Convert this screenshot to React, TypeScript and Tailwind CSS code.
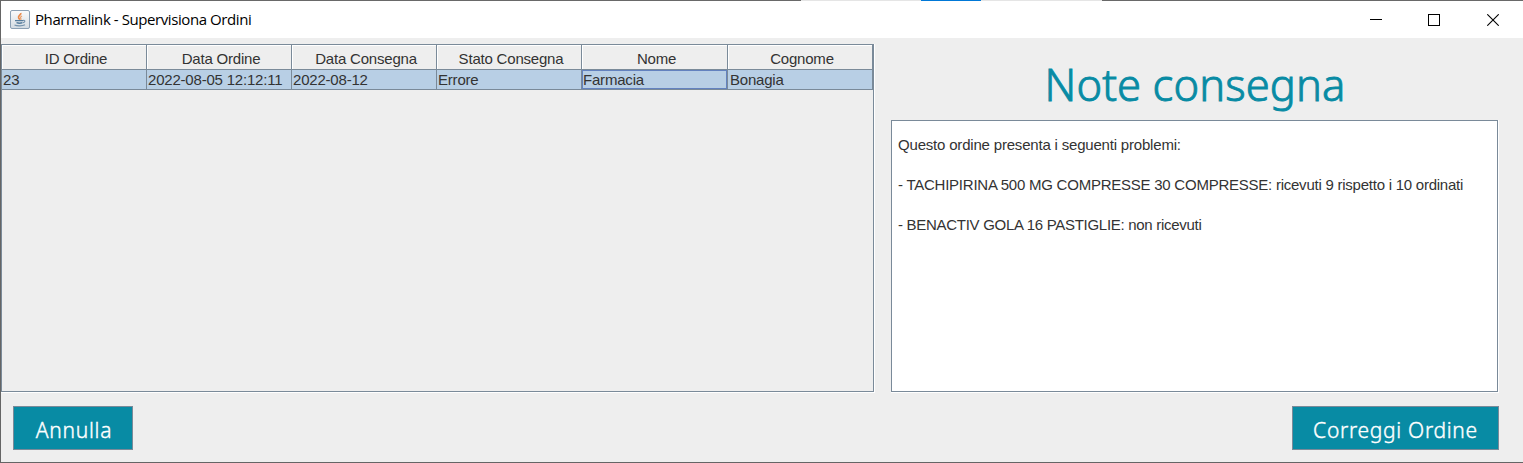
import type { ReactNode } from "react";

const columns = [
  { title: "ID Ordine", value: "23", width: "w-[145px]", inset: "pl-px" },
  { title: "Data Ordine", value: "2022-08-05 12:12:11", width: "w-[145px]", inset: "pl-px" },
  { title: "Data Consegna", value: "2022-08-12", width: "w-[145px]", inset: "pl-px" },
  { title: "Stato Consegna", value: "Errore", width: "w-[145px]", inset: "pl-px" },
  { title: "Nome", value: "Farmacia", width: "w-[146px]", inset: "pl-px", focused: true },
  { title: "Cognome", value: "Bonagia", width: "w-[145px]", inset: "pl-[2px]" },
];

function JavaIcon() {
  return (
    <svg className="h-5 w-5" viewBox="0 0 20 20" fill="none">
      <defs>
        <linearGradient id="tile" x1="0" y1="0" x2="0" y2="1">
          <stop offset="0" stopColor="#fafbfc" />
          <stop offset="1" stopColor="#d3dbe2" />
        </linearGradient>
      </defs>
      <rect x="0.5" y="0.5" width="19" height="18" rx="1.5" fill="url(#tile)" stroke="#8ba0b4" />
      <path d="M10.800 3c.6 1.800-3 2.700-2.200 4.700.3.800 1 1.300 1.400 2" stroke="#e98a4b" strokeWidth="1.700" />
      <path d="M12 6c-1.700.8-1.800 1.500-1.200 2.300.4.600.3 1-.2 1.600" stroke="#e9a06d" strokeWidth="1.200" />
      <path d="M5 10.700h8M6.500 12.700c2 .7 4 .7 6 0" stroke="#547b9b" strokeWidth="1.300" />
      <path d="M13 10.500c2.500-.6 2.300 1.600 0 2.300M4.500 15c2.500 1.200 8 1.200 10.500-.2" stroke="#7593ad" strokeWidth="1.200" />
    </svg>
  );
}

function ActionButton({ children, className }: { children: ReactNode; className: string }) {
  return (
    <button
      className={`flex h-11 items-center justify-center whitespace-nowrap border border-[#7a8a99] bg-[#088ba4] pt-[5px] font-['Noto_Sans','Open_Sans',sans-serif] text-[21px] font-light tracking-[0.700px] text-white [-webkit-text-stroke:0.400px_#ffffff] ${className}`}
    >
      {children}
    </button>
  );
}

export default function App() {
  return (
    <div className="flex h-[463px] w-[1523px] flex-col overflow-hidden border-b border-l border-[#656565] bg-[#eeeeee] font-['Liberation_Sans',Arial,sans-serif] text-[15px] tracking-[-0.200px] text-[#333333]">
      <div className="flex h-px shrink-0">
        <div className="w-[800px] bg-[#696969]" />
        <div className="w-[120px] bg-[#e5e5e5]" />
        <div className="w-[60px] bg-[#0078d7]" />
        <div className="w-[121px] bg-[#e5e5e5]" />
        <div className="grow bg-[#696969]" />
      </div>
      <header className="flex h-[37px] shrink-0 items-center bg-white pl-[9px] text-black">
        <JavaIcon />
        <span className="ml-[5px] whitespace-nowrap font-['Open_Sans','Noto_Sans',sans-serif] text-[15px] tracking-[-0.420px]">
          Pharmalink - Supervisiona Ordini
        </span>
        <div className="ml-auto flex items-center pr-[24px]">
          <svg className="mr-[46px] h-3 w-3" viewBox="0 0 12 12" shapeRendering="crispEdges">
            <path d="M0 5.500h12" stroke="#000" />
          </svg>
          <svg className="mr-[47px] h-3 w-3" viewBox="0 0 12 12" shapeRendering="crispEdges">
            <rect x="0.5" y="0.5" width="11" height="11" fill="none" stroke="#000" />
          </svg>
          <svg className="h-3 w-3" viewBox="0 0 12 12">
            <path d="M.3.3l11.400 11.400M11.700.3L.3 11.700" stroke="#000" strokeWidth="1.100" />
          </svg>
        </div>
      </header>
      <main className="flex h-[355px] shrink-0">
        <section className="mt-[6px] h-[349px] w-[874px] border-b border-r border-white">
          <div className="h-[348px] w-[873px] border border-[#7a8a99]">
            <div className="flex">
              {columns.map((c) => (
                <div
                  key={c.title}
                  className={`flex h-[25px] shrink-0 items-center justify-center border-b border-r border-[#7a8a99] pl-1 pt-[5px] shadow-[inset_1px_1px_0_#ffffff] ${c.width}`}
                >
                  {c.title}
                </div>
              ))}
            </div>
            <div className="flex">
              {columns.map((c) => (
                <div key={c.title} className={`h-5 shrink-0 border-b border-r border-[#7a8a99] bg-[#b8cfe5] ${c.width}`}>
                  <div
                    className={`flex h-[19px] items-center whitespace-nowrap pt-px leading-[18px] ${c.inset} ${c.focused ? "shadow-[inset_0_0_0_1px_#6382bf]" : ""}`}
                  >
                    {c.value}
                  </div>
                </div>
              ))}
            </div>
          </div>
        </section>
        <section className="ml-[16px] w-[608px]">
          <h1 className="flex h-[82px] items-center justify-center whitespace-nowrap pt-[11px] font-['Noto_Sans','Open_Sans',sans-serif] text-[43.500px] font-light leading-none tracking-[0.100px] text-[#088ba4] [-webkit-text-stroke:0.900px_#088ba4]">
            Note consegna
          </h1>
          <div className="h-[273px] border-b border-r border-white">
            <div className="h-[272px] whitespace-pre border border-[#7a8a99] bg-white px-[6px] pt-[14px] leading-5 tracking-[-0.190px]">
              <p>Questo ordine presenta i seguenti problemi:</p>
              <p className="mt-5 tracking-[-0.240px]">- TACHIPIRINA 500 MG COMPRESSE 30 COMPRESSE: ricevuti 9 rispetto i 10 ordinati</p>
              <p className="mt-5 tracking-[-0.290px]">- BENACTIV GOLA 16 PASTIGLIE: non ricevuti</p>
            </div>
          </div>
        </section>
      </main>
      <footer className="flex justify-between pl-3 pr-6 pt-[13px]">
        <ActionButton className="w-[120px] pl-[2px]">Annulla</ActionButton>
        <ActionButton className="w-[207px]">Correggi Ordine</ActionButton>
      </footer>
    </div>
  );
}
